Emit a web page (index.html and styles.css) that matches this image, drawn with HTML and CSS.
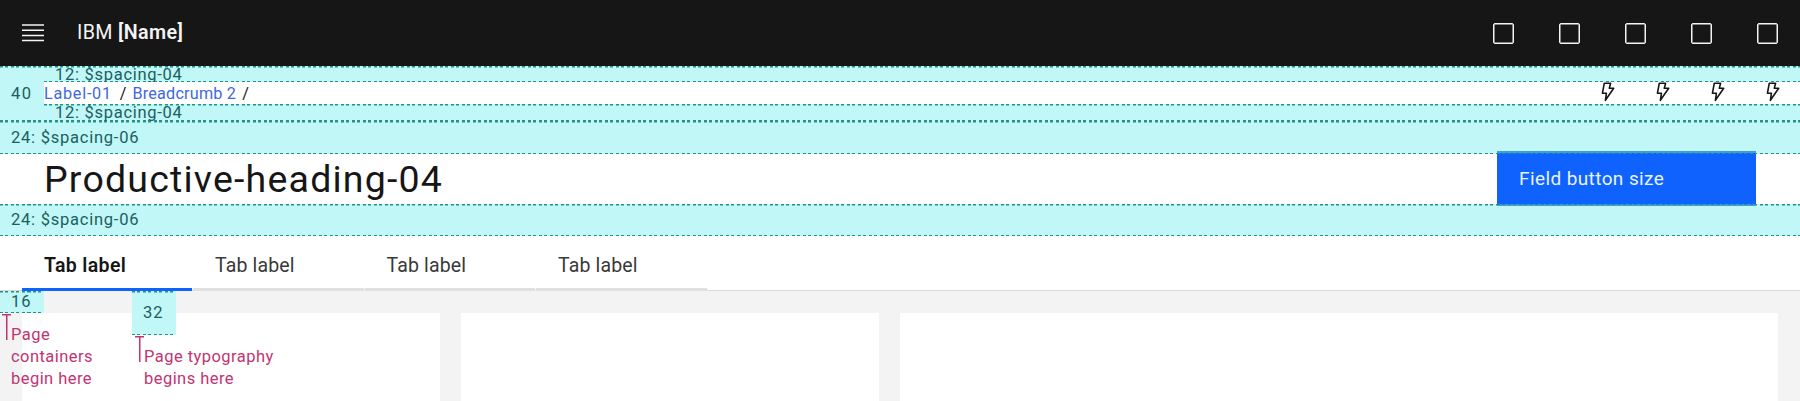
FILE: index.html
```html
<!DOCTYPE html>
<html lang="en">
<head>
<meta charset="utf-8">
<title>IBM [Name]</title>
<link rel="stylesheet" href="styles.css">
</head>
<body>
<header class="header">
  <svg class="menu" width="22" height="18" viewBox="0 0 22 18"><path d="M0 1h22M0 6.2h22M0 11.4h22M0 16.6h22" stroke="#f4f4f4" stroke-width="1.5"/></svg>
  <div class="brand">IBM <b>[Name]</b></div>
  <div class="actions"><i></i><i></i><i></i><i></i><i></i></div>
</header>
<div class="crumb-area">
  <div class="forty">40</div>
  <div class="crumb-main">
    <div class="band band-top"><span>12: $spacing-04</span></div>
    <div class="crumbs">
      <a class="c1">Label-01</a><span class="s1">/</span><a class="c2">Breadcrumb 2</a><span>/</span>
      <div class="bolts">
        <svg width="14" height="20" viewBox="0 0 14 20"><path d="M3.3 1.2H9.6L8.3 6.3H12.7L4.4 18.3L5.4 11.3H1.4Z"/></svg>
        <svg width="14" height="20" viewBox="0 0 14 20"><path d="M3.3 1.2H9.6L8.3 6.3H12.7L4.4 18.3L5.4 11.3H1.4Z"/></svg>
        <svg width="14" height="20" viewBox="0 0 14 20"><path d="M3.3 1.2H9.6L8.3 6.3H12.7L4.4 18.3L5.4 11.3H1.4Z"/></svg>
        <svg width="14" height="20" viewBox="0 0 14 20"><path d="M3.3 1.2H9.6L8.3 6.3H12.7L4.4 18.3L5.4 11.3H1.4Z"/></svg>
      </div>
    </div>
    <div class="band band-bottom"><span>12: $spacing-04</span></div>
  </div>
</div>
<div class="spacer upper">24: $spacing-06</div>
<div class="title-row">
  <h1>Productive-heading-04</h1>
  <button class="button">Field button size</button>
</div>
<div class="spacer lower">24: $spacing-06</div>
<nav class="tabs">
  <div class="tab active">Tab label</div>
  <div class="tab">Tab label</div>
  <div class="tab">Tab label</div>
  <div class="tab">Tab label</div>
</nav>
<main class="content">
  <section class="card"></section>
  <section class="card"></section>
  <section class="card wide"></section>
  <div class="mark m16">16</div>
  <div class="mark m32">32</div>
  <div class="note n1">Page<br>containers<br>begin here</div>
  <div class="note n2">Page typography<br>begins here</div>
</main>
</body>
</html>
```
FILE: styles.css
```css
:root {
  --dash: repeating-linear-gradient(90deg, #2a9087 0 3px, transparent 3px 5.5px);
}
* { box-sizing: border-box; }
body {
  margin: 0;
  width: 1800px;
  height: 401px;
  overflow: hidden;
  background: #fff;
  font-family: Roboto, "Open Sans", sans-serif;
  font-size: 16.5px;
  color: #161616;
}
.header {
  height: 66px;
  display: flex;
  align-items: center;
  padding: 0 22px;
  background: #161616;
  color: #f4f4f4;
}
.menu { display: block; }
.brand {
  margin-left: 33px;
  font-size: 19.7px;
  line-height: 24px;
  letter-spacing: .35px;
  white-space: nowrap;
}
.brand b { font-weight: 600; }
.actions { margin-left: auto; display: flex; gap: 45px; }
.actions i {
  width: 21px;
  height: 21px;
  border: 1px solid #f4f4f4;
  border-radius: 2px;
  box-shadow: inset 0 0 0 .5px #f4f4f4;
}
.crumb-area {
  display: flex;
  height: 54px;
  background: var(--dash) 0 0 / 100% 1.5px no-repeat, #c1f7f7;
}
.forty {
  width: 44px;
  padding: 18px 0 0 11px;
  line-height: 20px;
  letter-spacing: 1.4px;
  color: #1b605f;
}
.crumb-main { flex: 1; display: flex; flex-direction: column; }
.band {
  height: 16px;
  padding-left: 11px;
  color: #1b605f;
  letter-spacing: .72px;
  line-height: 18px;
}
.band-top {
  background: var(--dash) 0 100% / 100% 1.5px no-repeat;
}
.band-bottom {
  background: var(--dash) 0 0 / 100% 1.5px no-repeat;
}
.crumbs {
  height: 22px;
  display: flex;
  background: #fff;
  line-height: 23px;
  font-size: 16.2px;
}
.crumbs a { color: #3e68e0; }
.c1 { letter-spacing: .75px; }
.c2 { letter-spacing: .2px; margin-right: 6px; }
.s1 { margin: 0 6px 0 8px; }
.bolts { margin-left: auto; display: flex; gap: 41px; padding-right: 20px; }
.bolts svg { display: block; }
.bolts path { fill: none; stroke: #161616; stroke-width: 1.6; stroke-linejoin: round; }
.spacer {
  padding-left: 11px;
  color: #1b605f;
  letter-spacing: .76px;
}
.upper {
  height: 34px;
  line-height: 35px;
  background: var(--dash) 0 0 / 100% 2.5px no-repeat, var(--dash) 0 100% / 100% 1.5px no-repeat, #c1f7f7;
}
.title-row {
  height: 50px;
  display: flex;
  align-items: center;
  justify-content: space-between;
  padding: 0 44px;
}
h1 {
  margin: 0;
  font-size: 37.5px;
  font-weight: 400;
  line-height: 50px;
  letter-spacing: 1.2px;
}
.button {
  flex: none;
  width: 259px;
  height: 55px;
  margin-top: -1px;
  padding: 0 0 0 22px;
  border: 0;
  font: 19px/53px Roboto, "Open Sans", sans-serif;
  letter-spacing: .4px;
  text-align: left;
  color: #e8f4ff;
  background: var(--dash) 0 2px / 100% 1px no-repeat, var(--dash) 0 53px / 100% 1px no-repeat, linear-gradient(#3d9de0 0 2px, #0f62fe 2px 53px, #3d9de0 53px);
}
.lower {
  height: 32px;
  line-height: 31px;
  background: var(--dash) 0 0 / 100% 1.5px no-repeat, var(--dash) 0 100% / 100% 1.5px no-repeat, #c1f7f7;
}
.tabs {
  height: 55px;
  display: flex;
  padding-left: 22px;
  border-bottom: 1px solid #d8d8d8;
}
.tab {
  width: 171.5px;
  height: 55px;
  padding-left: 22px;
  border-bottom: 3px solid #e0e0e0;
  border-right: 1px solid #fff;
  font-size: 19.5px;
  line-height: 59px;
  letter-spacing: .15px;
  color: #393939;
}
.tab.active {
  width: 170px;
  margin-right: 1px;
  border-right: 0;
  border-bottom-color: #0f62fe;
  font-weight: 600;
  letter-spacing: .35px;
  color: #161616;
}
.content {
  position: relative;
  height: 110px;
  display: grid;
  grid-template-columns: 417.5px 417.5px 1fr;
  gap: 21.5px;
  padding: 22px 22px 0;
  background: #f3f3f3;
}
.card { background: #fff; }
/* Spacing annotations drawn over the page */
.mark {
  position: absolute;
  top: 0;
  width: 44px;
  letter-spacing: .9px;
  color: #1b605f;
  background: var(--dash) 0 0 / 100% 1.5px no-repeat, var(--dash) 0 100% / 100% 1.5px no-repeat, #c1f7f7;
}
.m16 { left: 0; height: 22px; padding-left: 11px; line-height: 22px; }
.m32 { left: 132px; height: 44px; padding-left: 11px; line-height: 44px; }
.note {
  position: absolute;
  padding-left: 9px;
  line-height: 22px;
  letter-spacing: .45px;
  color: #c33371;
  background: linear-gradient(#c33371, #c33371) 0 0 / 9px 1.5px no-repeat, linear-gradient(#c33371, #c33371) 4px 0 / 1.5px 26px no-repeat;
}
.n1 { left: 2px; top: 23px; padding-top: 10px; }
.n2 { left: 135px; top: 45px; padding-top: 10px; }
```
